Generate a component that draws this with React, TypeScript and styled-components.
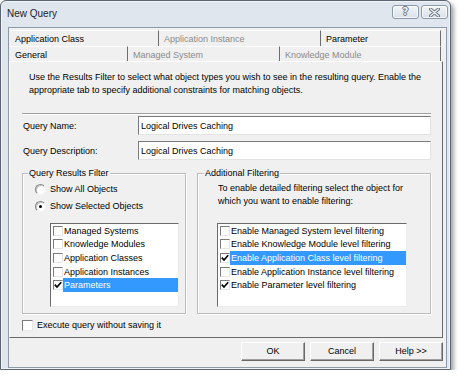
import React from 'react'
import styled, { createGlobalStyle } from 'styled-components'

const GlobalStyle = createGlobalStyle`
    html, body {
        margin: 0;
        padding: 0;
        background: #fff;
    }
    body {
        font-family: "Liberation Sans", Arial, sans-serif;
        font-size: 9px;
        color: #000;
    }
    * {
        box-sizing: border-box;
    }
`;

const Window = styled.div`
    width: 451px;
    height: 370px;
    display: flex;
    flex-direction: column;
    background: #dfe6ee;
    border: 1px solid #5c6570;
    border-radius: 6px 6px 0 0;
    box-shadow: 3px 3px 4px rgba(0, 0, 0, 0.35), inset 0 0 0 1px rgba(255, 255, 255, 0.55);
`;

const TitleBar = styled.div`
    height: 26px;
    display: flex;
    align-items: flex-start;
    padding: 0 2px 0 6px;
`;

const Title = styled.div`
    font-size: 10px;
    line-height: 12px;
    margin-top: 7px;
    color: #1e1e1e;
    flex: 1;
`;

const CaptionButton = styled.div<{ $w: number }>`
    width: ${p => p.$w}px;
    height: 14px;
    margin-top: 4px;
    margin-left: 2px;
    border: 1px solid #8c99a8;
    border-radius: 3px;
    background: linear-gradient(#f2f5f8, #d9e1ea);
    box-shadow: inset 0 0 0 1px rgba(255, 255, 255, 0.7);
    display: flex;
    align-items: center;
    justify-content: center;
`;

const HelpGlyph = styled.span`
    font-family: "DejaVu Sans", sans-serif;
    font-weight: bold;
    font-size: 10px;
    line-height: 10px;
    color: #eef1f4;
    text-shadow: 1px 0 0 #6a737d, -1px 0 0 #6a737d, 0 1px 0 #6a737d, 0 -1px 0 #6a737d;
`;

const Client = styled.div`
    flex: 1;
    margin: 0 3px 1px 7px;
    background: #f0f0f0;
    border: 1px solid #8e9aa7;
    padding: 2px 3px 0 0;
    display: flex;
    flex-direction: column;
`;

const TabRow = styled.div<{ $h: number }>`
    display: flex;
    height: ${p => p.$h}px;
    padding-left: 1px;
`;

const Tab = styled.div<{ $w: number; $disabled?: boolean }>`
    width: ${p => p.$w}px;
    border-top: 1px solid #fff;
    border-right: 1px solid #6d6d6d;
    padding: 1px 0 0 5px;
    line-height: 14px;
    white-space: nowrap;
    color: ${p => (p.$disabled ? '#8b8b8b' : '#000')};
`;

const Panel = styled.div`
    width: 434px;
    height: 277px;
    border: 1px solid;
    border-color: #fff #696969 #696969 #fff;
    padding: 9px 11px 0 12px;
    display: flex;
    flex-direction: column;
`;

const Intro = styled.div`
    padding-left: 7px;
    line-height: 13px;
`;

const Separator = styled.div`
    margin-top: 16px;
    height: 2px;
    border-top: 1px solid #a0a0a0;
    border-bottom: 1px solid #fff;
`;

const FieldRow = styled.div<{ $mt: number }>`
    display: flex;
    align-items: center;
    height: 19px;
    margin-top: ${p => p.$mt}px;
`;

const FieldLabel = styled.label`
    width: 116px;
    padding-left: 1px;
`;

const TextInput = styled.input`
    width: 293px;
    height: 19px;
    font: inherit;
    color: #000;
    background: #fff;
    border: 1px solid;
    border-color: #7a7a7a #e3e3e3 #e3e3e3 #7a7a7a;
    padding: 0 0 0 2px;
    outline: none;
`;

const Groups = styled.div`
    display: flex;
    gap: 11px;
    margin-top: 7px;
`;

const Group = styled.fieldset<{ $w: number }>`
    width: ${p => p.$w}px;
    height: 147px;
    margin: 0;
    padding: 0;
    border: 1px solid #bcbcbc;
    box-shadow: inset 1px 1px 0 #fff, 1px 1px 0 #fff;
    display: flex;
    flex-direction: column;
    min-width: 0;
`;

const Legend = styled.legend<{ $ml: number }>`
    margin-left: ${p => p.$ml}px;
    padding: 0 1px;
    line-height: 12px;
    background: #f0f0f0;
`;

const OptionRow = styled.div<{ $mt: number; $ml: number }>`
    display: flex;
    align-items: center;
    height: 12px;
    margin-top: ${p => p.$mt}px;
    margin-left: ${p => p.$ml}px;
    gap: 4px;
`;

const Radio = styled.span<{ $checked?: boolean }>`
    width: 11px;
    height: 11px;
    border-radius: 50%;
    border: 1px solid;
    border-color: #858585 #f4f4f4 #f4f4f4 #858585;
    background: #fff;
    box-shadow: inset 1px 1px 0 #c4c4c4;
    display: flex;
    align-items: center;
    justify-content: center;
    &::after {
        content: '';
        width: 3px;
        height: 3px;
        border-radius: 50%;
        background: ${p => (p.$checked ? '#000' : 'transparent')};
    }
`;

const Box = styled.span<{ $size: number }>`
    width: ${p => p.$size}px;
    height: ${p => p.$size}px;
    flex: none;
    border: 1px solid;
    border-color: #7b7b7b #e6e6e6 #e6e6e6 #7b7b7b;
    background: #fff;
    display: flex;
    align-items: center;
    justify-content: center;
`;

const GroupText = styled.div`
    margin: 3px 0 0 20px;
    line-height: 13px;
`;

const List = styled.div<{ $w: number; $ml: number; $mt: number }>`
    width: ${p => p.$w}px;
    height: 84px;
    margin-left: ${p => p.$ml}px;
    margin-top: ${p => p.$mt}px;
    background: #fff;
    border: 1px solid;
    border-color: #6b6b6b #ececec #ececec #6b6b6b;
    padding-left: 2px;
`;

const Item = styled.div`
    display: flex;
    align-items: center;
    height: 13.6px;
`;

const ItemLabel = styled.span<{ $selected?: boolean }>`
    flex: 1;
    height: 100%;
    display: flex;
    align-items: center;
    padding-left: 1px;
    white-space: nowrap;
    background: ${p => (p.$selected ? '#3399ff' : 'transparent')};
    color: ${p => (p.$selected ? '#fff' : '#000')};
`;

const CheckRow = styled.div`
    display: flex;
    align-items: center;
    gap: 4px;
    height: 12px;
    margin-top: 5px;
`;

const ButtonBar = styled.div`
    display: flex;
    justify-content: flex-end;
    gap: 5px;
    margin-top: 4px;
`;

const Button = styled.div`
    width: 64px;
    height: 19px;
    border: 1px solid;
    border-color: #fff #696969 #696969 #fff;
    box-shadow: inset -1px -1px 0 #a0a0a0;
    display: flex;
    align-items: center;
    justify-content: center;
    padding-bottom: 1px;
`;

const Check = () => (
    <svg width="8" height="8" viewBox="0 0 8 8">
        <path d="M0.8 3.6 L3 6 L7.2 1.2" fill="none" stroke="#000" strokeWidth="1.7" />
    </svg>
);

const CloseGlyph = () => (
    <svg width="11" height="9" viewBox="0 0 11 9">
        <path d="M1.5 1 L9.5 8 M9.5 1 L1.5 8" stroke="#6a737d" strokeWidth="3.2" strokeLinecap="round" />
        <path d="M1.5 1 L9.5 8 M9.5 1 L1.5 8" stroke="#eef1f4" strokeWidth="1.4" strokeLinecap="round" />
    </svg>
);

const objectTypes = [
    'Managed Systems',
    'Knowledge Modules',
    'Application Classes',
    'Application Instances',
    'Parameters',
];

const levelFilters = [
    { label: 'Enable Managed System level filtering', checked: false },
    { label: 'Enable Knowledge Module level filtering', checked: false },
    { label: 'Enable Application Class level filtering', checked: true },
    { label: 'Enable Application Instance level filtering', checked: false },
    { label: 'Enable Parameter level filtering', checked: true },
];

const App = () => {
    return (
        <>
            <GlobalStyle />
            <Window>
                <TitleBar>
                    <Title>New Query</Title>
                    <CaptionButton $w={27}>
                        <HelpGlyph>?</HelpGlyph>
                    </CaptionButton>
                    <CaptionButton $w={27}>
                        <CloseGlyph />
                    </CaptionButton>
                </TitleBar>
                <Client>
                    <TabRow $h={16}>
                        <Tab $w={149}>Application Class</Tab>
                        <Tab $w={162} $disabled>Application Instance</Tab>
                        <Tab $w={120}>Parameter</Tab>
                    </TabRow>
                    <TabRow $h={15}>
                        <Tab $w={118}>General</Tab>
                        <Tab $w={152} $disabled>Managed System</Tab>
                        <Tab $w={161} $disabled>Knowledge Module</Tab>
                    </TabRow>
                    <Panel>
                        <Intro>
                            Use the Results Filter to select what object types you wish to see in the resulting query. Enable the
                            <br />
                            appropriate tab to specify additional constraints for matching objects.
                        </Intro>
                        <Separator />
                        <FieldRow $mt={1}>
                            <FieldLabel>Query Name:</FieldLabel>
                            <TextInput defaultValue="Logical Drives Caching" />
                        </FieldRow>
                        <FieldRow $mt={6}>
                            <FieldLabel>Query Description:</FieldLabel>
                            <TextInput defaultValue="Logical Drives Caching" />
                        </FieldRow>
                        <Groups>
                            <Group $w={164}>
                                <Legend $ml={5}>Query Results Filter</Legend>
                                <OptionRow $mt={4} $ml={12}>
                                    <Radio />
                                    Show All Objects
                                </OptionRow>
                                <OptionRow $mt={5} $ml={12}>
                                    <Radio $checked />
                                    Show Selected Objects
                                </OptionRow>
                                <List $w={129} $ml={27} $mt={11}>
                                    {objectTypes.map((name, i) => {
                                        const selected = i === objectTypes.length - 1;
                                        return (
                                            <Item key={name}>
                                                <Box $size={10}>{selected && <Check />}</Box>
                                                <ItemLabel $selected={selected}>{name}</ItemLabel>
                                            </Item>
                                        );
                                    })}
                                </List>
                            </Group>
                            <Group $w={234}>
                                <Legend $ml={6}>Additional Filtering</Legend>
                                <GroupText>
                                    To enable detailed filtering select the object for
                                    <br />
                                    which you want to enable filtering:
                                </GroupText>
                                <List $w={190} $ml={19} $mt={15}>
                                    {levelFilters.map((f, i) => (
                                        <Item key={f.label}>
                                            <Box $size={10}>{f.checked && <Check />}</Box>
                                            <ItemLabel $selected={i === 2}>{f.label}</ItemLabel>
                                        </Item>
                                    ))}
                                </List>
                            </Group>
                        </Groups>
                        <CheckRow>
                            <Box $size={11} />
                            Execute query without saving it
                        </CheckRow>
                    </Panel>
                    <ButtonBar>
                        <Button>OK</Button>
                        <Button>Cancel</Button>
                        <Button>Help &gt;&gt;</Button>
                    </ButtonBar>
                </Client>
            </Window>
        </>
    );
};

export default App;
